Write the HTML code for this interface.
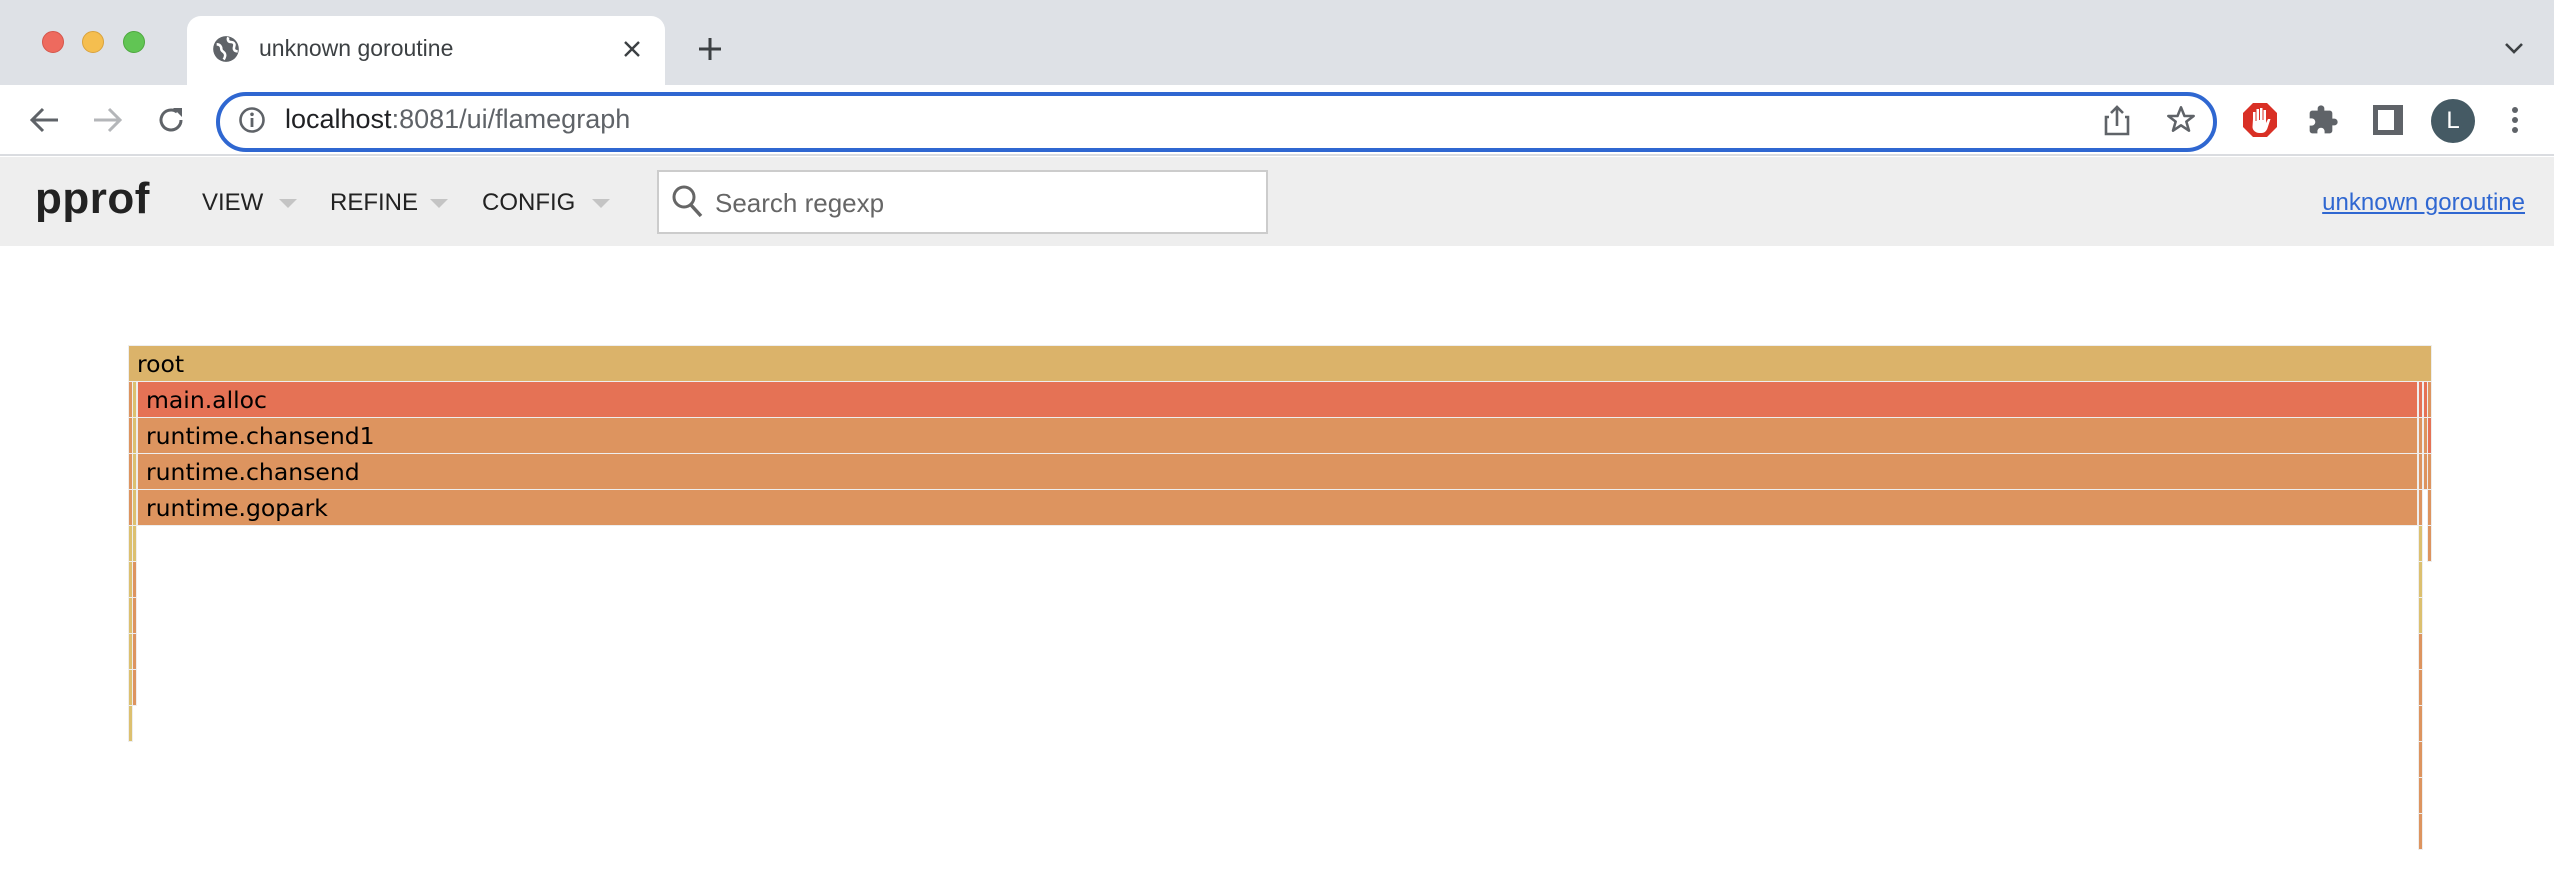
<!DOCTYPE html>
<html><head><meta charset="utf-8"><style>
*{margin:0;padding:0;box-sizing:border-box}
body{width:2554px;height:896px;background:#fff;position:relative;overflow:hidden;font-family:"Liberation Sans",sans-serif}
.abs{position:absolute}
.tabstrip{left:0;top:0;width:2554px;height:85px;background:#dee1e6}
.tab{left:187px;top:16px;width:478px;height:72px;background:#fff;border-radius:14px 14px 0 0}
.toolbar{left:0;top:85px;width:2554px;height:71px;background:#fff;border-bottom:2px solid #dadce0}
.url{left:216px;top:92px;width:2001px;height:60px;border:4px solid #2f67d1;border-radius:30px;background:#fff}
.hdr{left:0;top:157px;width:2554px;height:89px;background:#eeeeee}
.menu{font-size:24px;color:#222;top:189px}
.arr{width:0;height:0;border-left:9px solid transparent;border-right:9px solid transparent;border-top:9px solid #c4c4c4;top:199px}
.f{position:absolute;height:35px;font-family:"DejaVu Sans",sans-serif;font-size:23.5px;line-height:36px;padding-left:8px;color:#000;white-space:nowrap;overflow:hidden;box-shadow:0 0 0 1px #eee}
.r{background:#dbb36a}.m{background:#e57255}.o{background:#dd945f}.y{background:#dcc06f}
.t{position:absolute;width:3px;height:35px;box-shadow:0 0 0 1px #eee}
</style></head><body>
<div class="abs tabstrip"></div>
<div class="abs" style="left:42px;top:31px;width:22px;height:22px;border-radius:50%;background:#ee6a5e;border:1px solid #d5554a"></div>
<div class="abs" style="left:82px;top:31px;width:22px;height:22px;border-radius:50%;background:#f5be4f;border:1px solid #d9a23c"></div>
<div class="abs" style="left:123px;top:31px;width:22px;height:22px;border-radius:50%;background:#61c554;border:1px solid #4ea83f"></div>
<div class="abs tab"></div>
<svg class="abs" style="left:212px;top:35px" width="28" height="28" viewBox="0 0 24 24"><circle cx="12" cy="12" r="11" fill="#5f6368"/><path d="M4 8c3 0 4 2 4 4s2 2 3 4-1 5-1 5M14 2c-1 2 0 4 2 4s4 1 3 4 1 4 3 4" stroke="#fff" stroke-width="2.2" fill="none"/></svg>
<div class="abs" style="left:259px;top:35px;font-size:23px;color:#3c4043">unknown goroutine</div>
<svg class="abs" style="left:623px;top:40px" width="18" height="18"><path d="M2 2L16 16M16 2L2 16" stroke="#3c4043" stroke-width="2.4"/></svg>
<svg class="abs" style="left:697px;top:36px" width="26" height="26"><path d="M13 2V24M2 13H24" stroke="#3c4043" stroke-width="3"/></svg>
<svg class="abs" style="left:2504px;top:42px" width="20" height="14"><path d="M2 2L10 10L18 2" stroke="#3c4043" stroke-width="2.6" fill="none"/></svg>
<div class="abs toolbar"></div>
<svg class="abs" style="left:28px;top:106px" width="32" height="28"><path d="M30 14H4M15 3L4 14L15 25" stroke="#5f6368" stroke-width="3" fill="none"/></svg>
<svg class="abs" style="left:92px;top:106px" width="32" height="28"><path d="M2 14H28M17 3L28 14L17 25" stroke="#b4b6b9" stroke-width="3" fill="none"/></svg>
<svg class="abs" style="left:156px;top:105px" width="30" height="30" viewBox="0 0 30 30"><path d="M25 15A10 10 0 1 1 21 7" stroke="#5f6368" stroke-width="3" fill="none"/><path d="M17 3H26V12Z" fill="#5f6368"/></svg>
<div class="abs url"></div>
<svg class="abs" style="left:238px;top:106px" width="28" height="28"><circle cx="14" cy="14" r="11.5" stroke="#5f6368" stroke-width="2.6" fill="none"/><rect x="12.6" y="12" width="2.8" height="9" fill="#5f6368"/><circle cx="14" cy="8.3" r="1.8" fill="#5f6368"/></svg>
<div class="abs" style="left:285px;top:104px;font-size:27px;color:#202124">localhost<span style="color:#5f6368">:8081/ui/flamegraph</span></div>
<svg class="abs" style="left:2104px;top:104px" width="26" height="32"><path d="M5 13H2V30H24V13H21M13 22V3M7 9L13 3L19 9" stroke="#5f6368" stroke-width="2.6" fill="none"/></svg>
<svg class="abs" style="left:2165px;top:104px" width="32" height="32" viewBox="0 0 24 24"><path d="M12 2.5L14.6 9H21.5L16 13.2L18 20L12 16L6 20L8 13.2L2.5 9H9.4Z" stroke="#5f6368" stroke-width="1.9" fill="none" stroke-linejoin="round"/></svg>
<svg class="abs" style="left:2242px;top:102px" width="36" height="36" viewBox="0 0 36 36"><path d="M11 1H25L35 11V25L25 35H11L1 25V11Z" fill="#d93025"/><path d="M11 17V10h2.5v9h1V7h2.5v11h1V6h2.5v12h1V8h2.5v13l2-4h2.5l-3 9c-1 3-3 5-6 5h-2c-4 0-7-3-7-6z" fill="#fff"/></svg>
<svg class="abs" style="left:2307px;top:104px" width="32" height="32" viewBox="0 0 24 24"><path d="M20.5 11H19V7c0-1.1-.9-2-2-2h-4V3.5a2.5 2.5 0 0 0-5 0V5H4c-1.1 0-2 .9-2 2v3.8h1.5c1.5 0 2.7 1.2 2.7 2.7S5 16.2 3.5 16.2H2V20c0 1.1.9 2 2 2h3.8v-1.5c0-1.5 1.2-2.7 2.7-2.7s2.7 1.2 2.7 2.7V22H17c1.1 0 2-.9 2-2v-4h1.5a2.5 2.5 0 0 0 0-5z" fill="#5f6368"/></svg>
<div class="abs" style="left:2373px;top:105px;width:30px;height:30px;background:#5f6368"></div>
<div class="abs" style="left:2378px;top:110px;width:16px;height:20px;background:#fff"></div>
<div class="abs" style="left:2431px;top:99px;width:44px;height:44px;border-radius:50%;background:#455a64;color:#fff;font-size:24px;text-align:center;line-height:44px">L</div>
<div class="abs" style="left:2512px;top:107px;width:6px;height:6px;border-radius:50%;background:#5f6368;box-shadow:0 10px 0 #5f6368,0 20px 0 #5f6368"></div>
<div class="abs hdr"></div>
<div class="abs" style="left:35px;top:174px;font-size:44px;font-weight:bold;color:#222;letter-spacing:0.5px">pprof</div>
<div class="abs menu" style="left:202px">VIEW</div><div class="abs arr" style="left:279px"></div>
<div class="abs menu" style="left:330px">REFINE</div><div class="abs arr" style="left:430px"></div>
<div class="abs menu" style="left:482px">CONFIG</div><div class="abs arr" style="left:592px"></div>
<div class="abs" style="left:657px;top:170px;width:611px;height:64px;background:#fff;border:2px solid #ccc"></div>
<svg class="abs" style="left:671px;top:184px" width="34" height="36"><circle cx="13" cy="13" r="10" stroke="#666" stroke-width="3" fill="none"/><path d="M20 21L30 32" stroke="#666" stroke-width="3.5"/></svg>
<div class="abs" style="left:715px;top:188px;font-size:26px;color:#666">Search regexp</div>
<div class="abs" style="right:29px;top:189px;font-size:24px;color:#2f67d1;text-decoration:underline">unknown goroutine</div>

<div class="f r" style="left:129px;top:346px;width:2302px">root</div>
<div class="f m" style="left:138px;top:382px;width:2279px">main.alloc</div>
<div class="f o" style="left:138px;top:418px;width:2279px">runtime.chansend1</div>
<div class="f o" style="left:138px;top:454px;width:2279px">runtime.chansend</div>
<div class="f o" style="left:138px;top:490px;width:2279px">runtime.gopark</div>

<div class="t o" style="left:129px;top:382px"></div><div class="t y" style="left:133px;top:382px"></div>
<div class="t o" style="left:129px;top:418px"></div><div class="t y" style="left:133px;top:418px"></div>
<div class="t o" style="left:129px;top:454px"></div><div class="t y" style="left:133px;top:454px"></div>
<div class="t o" style="left:129px;top:490px"></div><div class="t y" style="left:133px;top:490px"></div>
<div class="t y" style="left:129px;top:526px"></div><div class="t y" style="left:133px;top:526px"></div>
<div class="t y" style="left:129px;top:562px"></div><div class="t o" style="left:133px;top:562px"></div>
<div class="t y" style="left:129px;top:598px"></div><div class="t o" style="left:133px;top:598px"></div>
<div class="t y" style="left:129px;top:634px"></div><div class="t o" style="left:133px;top:634px"></div>
<div class="t y" style="left:129px;top:670px"></div><div class="t o" style="left:133px;top:670px"></div>
<div class="t y" style="left:129px;top:706px"></div>

<div class="t m" style="left:2419px;top:382px"></div><div class="t m" style="left:2424px;top:382px"></div><div class="t o" style="left:2428px;top:382px"></div>
<div class="t o" style="left:2419px;top:418px"></div><div class="t o" style="left:2424px;top:418px"></div><div class="t m" style="left:2428px;top:418px"></div>
<div class="t o" style="left:2419px;top:454px"></div><div class="t o" style="left:2424px;top:454px"></div><div class="t o" style="left:2428px;top:454px"></div>
<div class="t o" style="left:2419px;top:490px"></div><div class="t o" style="left:2428px;top:490px"></div>
<div class="t y" style="left:2419px;top:526px"></div><div class="t o" style="left:2428px;top:526px"></div>
<div class="t y" style="left:2419px;top:562px"></div>
<div class="t y" style="left:2419px;top:598px"></div>
<div class="t o" style="left:2419px;top:634px"></div>
<div class="t o" style="left:2419px;top:670px"></div>
<div class="t o" style="left:2419px;top:706px"></div>
<div class="t o" style="left:2419px;top:742px"></div>
<div class="t o" style="left:2419px;top:778px"></div>
<div class="t o" style="left:2419px;top:814px"></div>
</body></html>
